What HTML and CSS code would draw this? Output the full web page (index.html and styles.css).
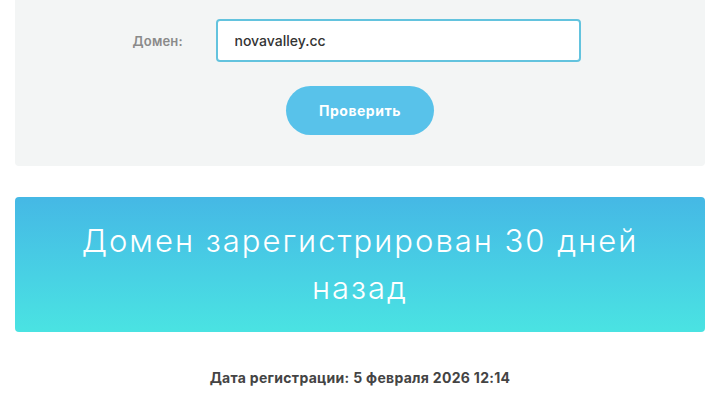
FILE: index.html
```html
<!DOCTYPE html>
<html lang="ru">
<head>
<meta charset="utf-8">
<title>Проверка домена</title>
<link rel="stylesheet" href="styles.css">
</head>
<body>
<div class="wrap">
  <div class="panel">
    <div class="row">
      <label class="label" for="domain">Домен:</label>
      <input class="field" id="domain" type="text" value="novavalley.cc">
    </div>
    <div class="actions">
      <button class="btn" type="button">Проверить</button>
    </div>
  </div>
  <div class="result">
    <div class="result-text">Домен зарегистрирован 30 дней назад</div>
  </div>
  <p class="date">Дата регистрации: 5 февраля 2026 12:14</p>
</div>
</body>
</html>
```
FILE: styles.css
```css
html, body {
  margin: 0;
  padding: 0;
  background: #ffffff;
}
body {
  font-family: Inter, "Noto Sans", "DejaVu Sans", sans-serif;
}
.wrap {
  width: 690px;
  margin-left: 15px;
}
.panel {
  background: #f3f5f5;
  border-radius: 0 0 4px 4px;
  padding: 19px 0 31px;
}
.row {
  display: flex;
  align-items: center;
  justify-content: center;
  gap: 33px;
  padding-right: 7px;
}
.label {
  width: 50px;
  font-size: 13px;
  font-weight: 600;
  color: #8a8a8a;
  letter-spacing: 0.2px;
  text-align: left;
}
.field {
  box-sizing: border-box;
  width: 365px;
  height: 43px;
  border: 2px solid #63c3de;
  border-radius: 4px;
  background: #ffffff;
  padding: 0 17px;
  font-family: inherit;
  font-size: 14px;
  font-weight: 500;
  color: #333333;
  outline: none;
}
.actions {
  display: flex;
  justify-content: center;
  margin-top: 24px;
}
.btn {
  width: 148px;
  height: 49px;
  border: none;
  border-radius: 25px;
  background: #58c2ea;
  color: #ffffff;
  font-family: inherit;
  font-size: 14px;
  font-weight: 700;
  letter-spacing: 0.5px;
  cursor: pointer;
}
.result {
  margin-top: 31px;
  height: 135px;
  box-sizing: border-box;
  border-radius: 4px;
  background: linear-gradient(180deg, #45b8e5 0%, #48d2e4 60%, #4ae3e2 100%);
  display: flex;
  align-items: center;
  justify-content: center;
  padding: 0 40px 2px;
}
.result-text {
  color: #ffffff;
  font-size: 31px;
  font-weight: 300;
  letter-spacing: 2px;
  line-height: 47px;
  text-align: center;
}
.date {
  margin: 37px 0 0;
  text-align: center;
  font-size: 14px;
  font-weight: 700;
  letter-spacing: 0.3px;
  color: #444444;
}
```
